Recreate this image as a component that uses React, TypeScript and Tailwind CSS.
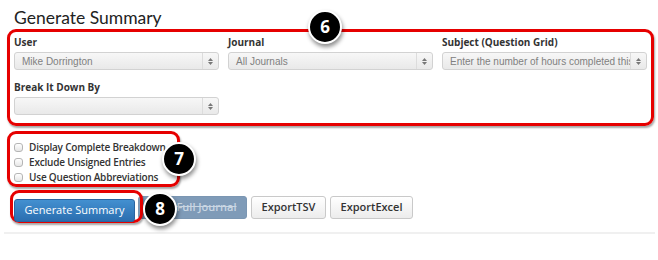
import React from "react";

function Badge({ n, className }: { n: number; className: string }) {
  return (
    <div
      className={
        "absolute w-[34px] h-[34px] rounded-full bg-black border-[2px] border-white shadow-[1px_3px_4px_rgba(0,0,0,0.45)] flex items-center justify-center text-white text-[17px] font-bold z-10 " +
        className
      }
      style={{ fontFamily: "'Open Sans', sans-serif" }}
    >
      {n}
    </div>
  );
}

function SelectBox({ value }: { value: string }) {
  return (
    <div className="h-[18px] flex items-stretch rounded-[3px] border border-[#d2d2d2] bg-gradient-to-b from-[#f7f7f7] to-[#e9e9e9] overflow-hidden">
      <div
        className="flex-1 flex items-center pl-[7px] text-[10px] text-[#808080] whitespace-nowrap overflow-hidden"
        style={{ fontFamily: "'Liberation Sans', Arial, sans-serif" }}
      >
        {value}
      </div>
      <div className="w-[16px] border-l border-[#dcdcdc] flex flex-col items-center justify-center gap-[1px]">
        <svg width="5" height="3" viewBox="0 0 5 3">
          <path d="M0 3 L2.5 0 L5 3 Z" fill="#777" />
        </svg>
        <svg width="5" height="3" viewBox="0 0 5 3">
          <path d="M0 0 L2.5 3 L5 0 Z" fill="#777" />
        </svg>
      </div>
    </div>
  );
}

function Field({ label, value }: { label: string; value: string }) {
  return (
    <div className="flex flex-col">
      <div className="h-[19px] flex items-center text-[10px] font-bold text-[#333]">{label}</div>
      <SelectBox value={value} />
    </div>
  );
}

function Check({ label }: { label: string }) {
  return (
    <div className="h-[15px] flex items-center gap-[6px]">
      <div className="w-[9px] h-[9px] rounded-[3px] border border-[#b5b5b5] bg-gradient-to-b from-white to-[#e6e6e6]" />
      <span className="text-[10px] font-semibold text-[#333] tracking-[-0.2px]">{label}</span>
    </div>
  );
}

export default function App() {
  return (
    <div
      className="relative w-[658px] h-[260px] bg-white overflow-hidden"
      style={{ fontFamily: "'Open Sans', sans-serif" }}
    >
      <h1
        className="pl-[14px] pt-[7px] h-[29px] text-[17.5px] font-normal leading-[22px] text-[#222]"
        style={{ fontFamily: "Lato, sans-serif" }}
      >
        Generate Summary
      </h1>

      <div className="ml-[7px] w-[647px] h-[97px] border-[3px] border-[#e60000] rounded-[9px] shadow-[1px_2px_2px_rgba(0,0,0,0.35)] pl-[4px] pt-[1px]">
        <div className="grid grid-cols-[205px_205px_205px] gap-x-[9px] gap-y-[8px]">
          <Field label="User" value="Mike Dorrington" />
          <Field label="Journal" value="All Journals" />
          <Field label="Subject (Question Grid)" value="Enter the number of hours completed this" />
          <Field label="Break It Down By" value="" />
        </div>
      </div>

      <div className="ml-[7px] mt-[5px] w-[173px] h-[56px] border-[3px] border-[#e60000] rounded-[9px] shadow-[1px_2px_2px_rgba(0,0,0,0.35)] pl-[4px] pt-[6px]">
        <Check label="Display Complete Breakdown" />
        <Check label="Exclude Unsigned Entries" />
        <Check label="Use Question Abbreviations" />
      </div>

      <div className="mt-[9px] ml-[14px] flex gap-[3px]">
        <div className="relative">
          <div className="absolute -left-[4px] -top-[6px] w-[133px] h-[33px] border-[3px] border-[#e60000] rounded-[9px] shadow-[1px_2px_2px_rgba(0,0,0,0.35)]" />
          <button className="relative w-[121px] h-[23px] rounded-[3px] border border-[#2a64a0] bg-gradient-to-b from-[#4390d0] to-[#2b6eb0] text-white text-[11px]">
            Generate Summary
          </button>
        </div>
        <button className="w-[109px] h-[23px] pl-[28px] rounded-[3px] border border-[#7b96b2] bg-[#7f9bb8] text-[#c9d6e3] text-[11px] font-semibold line-through">
          Full Journal
        </button>
        <button className="ml-[1px] w-[75px] h-[23px] rounded-[3px] border border-[#c9c9c9] bg-gradient-to-b from-white to-[#ececec] text-[#333] text-[11px] font-semibold">
          ExportTSV
        </button>
        <button className="ml-[1px] w-[83px] h-[23px] rounded-[3px] border border-[#c9c9c9] bg-gradient-to-b from-white to-[#ececec] text-[#333] text-[11px] font-semibold">
          ExportExcel
        </button>
      </div>

      <div className="mt-[10px] ml-[4px] w-[651px] h-[2px] bg-[#f0f0f0]" />

      <Badge n={6} className="left-[308px] top-[10px]" />
      <Badge n={7} className="left-[162px] top-[142px]" />
      <Badge n={8} className="left-[143px] top-[192px]" />
    </div>
  );
}
